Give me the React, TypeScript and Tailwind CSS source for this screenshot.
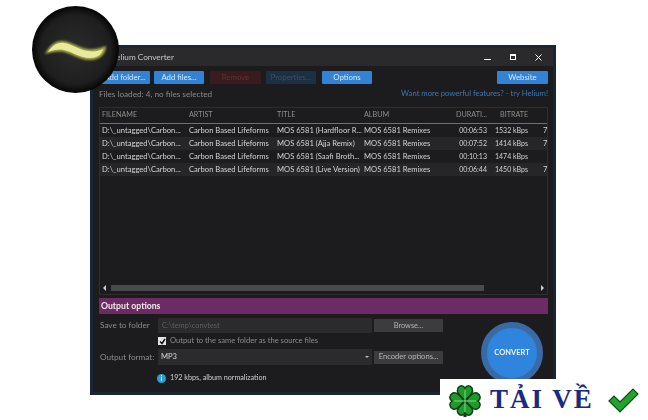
const rows = [
  ['MOS 6581 (Hardfloor R...', '00:06:53', '1532 kBps', '7'],
  ['MOS 6581 (Ajja Remix)', '00:07:52', '1414 kBps', '7'],
  ['MOS 6581 (Saafi Broth...', '00:10:13', '1474 kBps', ''],
  ['MOS 6581 (Live Version)', '00:06:44', '1450 kBps', '7'],
]

function ToolButton({ label, tone = 'blue', width }: { label: string; tone?: 'blue' | 'red' | 'slate'; width: string }) {
  const look =
    tone === 'blue'
      ? 'bg-[#3282d6] text-[#d6e8fa]'
      : tone === 'red'
        ? 'bg-[#3a1c1e] text-[#5e3234]'
        : 'bg-[#1c3044] text-[#35506a]'
  return <div className={`${width} h-[13px] flex items-center justify-center text-[7.8px] rounded-[1px] ${look}`}>{label}</div>
}

function Logo() {
  return (
    <svg className="absolute left-[32px] top-[6px] z-10" width="88" height="88" viewBox="0 0 88 88">
      <defs>
        <radialGradient id="disc" cx="50%" cy="50%" r="50%">
          <stop offset="0%" stopColor="#2c2c2d" />
          <stop offset="80%" stopColor="#1e1e1f" />
          <stop offset="100%" stopColor="#050505" />
        </radialGradient>
        <filter id="glow" x="-30%" y="-60%" width="160%" height="220%">
          <feGaussianBlur stdDeviation="1.2" />
        </filter>
      </defs>
      <circle cx="43.5" cy="43.5" r="43.5" fill="url(#disc)" />
      <path d="M13 48C17 40 23 34 31 35C40 36 47 42 56 43C62 44 68 42 74 40C74 48 68 54 58 54C48 54 41 48 32 46C26 45 20 46 13 48Z" fill="#a9ab4c" filter="url(#glow)" />
      <path d="M16 46C20 40 25 36 32 37C40 38 47 44 56 45C62 46 67 45 71 43C70 49 64 52 58 52C48 52 41 46 32 44C26 43 21 44 16 46Z" fill="#e9eb9c" />
    </svg>
  )
}

function Watermark() {
  return (
    <div className="absolute left-[440px] top-[379px] w-[208px] h-[41px] bg-white flex items-center">
      <svg className="ml-[9px] mt-[3px]" width="32" height="34" viewBox="0 0 32 34">
        <path d="M16 33V17" stroke="#0f3d12" strokeWidth="3" />
        <g fill="#1f9a2b" stroke="#123f14" strokeWidth="1.5">
          <path d="M16 16C10 12 7 8 9 4C11 1 14 1 16 4C18 1 21 1 23 4C25 8 22 12 16 16Z" />
          <path d="M15 17C11 11 7 8 4 9C0 11 0 15 3 17C0 19 0 23 4 25C7 26 11 23 15 17Z" />
          <path d="M17 17C21 11 25 8 28 9C32 11 32 15 29 17C32 19 32 23 28 25C25 26 21 23 17 17Z" />
          <path d="M16 18C10 22 7 26 9 29C11 32 14 32 16 29C18 32 21 32 23 29C25 26 22 22 16 18Z" />
        </g>
        <path d="M16 6V28M5 17H27" stroke="#7fd98a" strokeWidth="1" />
      </svg>
      <span className="ml-[9px] w-[106px] font-['Liberation_Serif',serif] font-bold text-[27px] leading-none tracking-[2px] text-[#1a2a80] whitespace-nowrap">
        TẢI VỀ
      </span>
      <svg className="ml-[11px]" width="32" height="28" viewBox="0 0 32 28">
        <path d="M2 15L7 10L13 16L26 3L31 8L13 26Z" fill="#21a32f" stroke="#0f4d16" strokeWidth="1.2" />
      </svg>
    </div>
  )
}

export default function App() {
  return (
    <div className="relative w-[648px] h-[420px] bg-white overflow-hidden font-['Lato',sans-serif]">
      <Logo />

      {/* App window */}
      <div className="absolute left-[90px] top-[45px] w-[466px] h-[350px] border-[3px] border-[#1a2635] bg-[#1c1c1e] flex flex-col blur-[0.3px]">
        <div className="h-[18px] shrink-0 bg-[#2a2a2c] flex items-center justify-between pl-[17px] pr-[11px]">
          <span className="text-[8.2px] text-[#c8c8c8]">Helium Converter</span>
          <div className="flex items-center gap-[19px]">
            <div className="w-[7px] h-[1.5px] bg-white mt-[5px]" />
            <div className="w-[6px] h-[6px] border border-t-2 border-white" />
            <svg width="7" height="7" viewBox="0 0 7 7" stroke="#fff" strokeWidth="1">
              <path d="M0.5 0.5L6.5 6.5M6.5 0.5L0.5 6.5" />
            </svg>
          </div>
        </div>

        <div className="flex-1 flex flex-col pl-[6px] pr-[5px]">
          <div className="mt-[5px] flex items-center">
            <ToolButton label="Add folder..." width="w-[50px] ml-[1px]" />
            <ToolButton label="Add files..." width="w-[50px] ml-[4px]" />
            <ToolButton label="Remove" tone="red" width="w-[51px] ml-[6px]" />
            <ToolButton label="Properties..." tone="slate" width="w-[50px] ml-[5px]" />
            <ToolButton label="Options" width="w-[50px] ml-[6px]" />
            <div className="flex-1" />
            <ToolButton label="Website" width="w-[51px]" />
          </div>

          <div className="mt-[3px] h-[14px] flex items-center justify-between">
            <span className="text-[8.2px] text-[#8a8a8a]">Files loaded: 4, no files selected</span>
            <span className="text-[7.7px] text-[#3b78b8]">Want more powerful features? - try Helium!</span>
          </div>

          {/* File list */}
          <div className="mt-[6px] h-[188px] border border-[#2e2e30] flex flex-col overflow-hidden">
            <div className="h-[16px] shrink-0 border-b border-[#707070] grid grid-cols-[89px_88px_87px_87px_36px_56px_1fr] items-center text-[7.2px] text-[#8e8e8e]">
              <span className="pl-[2px]">FILENAME</span>
              <span>ARTIST</span>
              <span>TITLE</span>
              <span>ALBUM</span>
              <span className="text-right whitespace-nowrap">DURATI...</span>
              <span className="pl-[13px]">BITRATE</span>
              <span />
            </div>
            {rows.map(([title, time, rate, extra], i) => (
              <div
                key={title}
                className={`h-[13px] shrink-0 grid grid-cols-[89px_88px_87px_87px_36px_56px_1fr] items-center text-[7.6px] text-[#d4d4d4] whitespace-nowrap ${i % 2 === 1 ? 'bg-[#262628]' : ''}`}
              >
                <span className="pl-[2px]">D:\_untagged\Carbon...</span>
                <span>Carbon Based Lifeforms</span>
                <span>{title}</span>
                <span>MOS 6581 Remixes</span>
                <span className="text-right text-[7px]">{time}</span>
                <span className="pl-[8px] text-[7px]">{rate}</span>
                <span>{extra}</span>
              </div>
            ))}
            <div className="flex-1" />
            <div className="h-[9px] mb-[2px] shrink-0 flex items-center px-[3px] gap-[3px]">
              <div className="w-0 h-0 border-y-[3px] border-y-transparent border-r-[3px] border-r-[#cfcfcf]" />
              <div className="ml-[2px] w-[373px] h-[6px] bg-[#4a4a4c]" />
              <div className="flex-1" />
              <div className="w-0 h-0 border-y-[3px] border-y-transparent border-l-[3px] border-l-[#cfcfcf]" />
            </div>
          </div>

          <div className="mt-[3px] h-[16px] bg-[#6d2a63] flex items-center pl-[2px] text-[8.7px] font-bold text-[#ececec]">Output options</div>

          {/* Output options */}
          <div className="mt-[4px] grid grid-cols-[57px_214px_auto] gap-x-[2px] items-center justify-start text-[8.2px] text-[#8c8c8c] whitespace-nowrap">
            <span className="pl-[1px]">Save to folder</span>
            <div className="h-[15px] bg-[#2b2b2d] flex items-center pl-[4px] text-[7.4px] text-[#5f5f5f]">C:\temp\convtest</div>
            <div className="w-[69px] h-[13px] bg-[#3c3c3e] flex items-center justify-center text-[7.4px] text-[#b4b4b4]">Browse...</div>

            <span />
            <div className="h-[16px] flex items-center gap-[4px]">
              <div className="w-[8px] h-[8px] bg-[#e4e4e4] flex items-center justify-center">
                <svg width="7" height="7" viewBox="0 0 7 7" fill="none" stroke="#111" strokeWidth="1.5">
                  <path d="M1 3.5L3 5.5L6 1" />
                </svg>
              </div>
              <span className="text-[7.6px] text-[#8c8c8c]">Output to the same folder as the source files</span>
            </div>
            <span />

            <span className="pl-[1px]">Output format:</span>
            <div className="h-[16px] bg-[#2b2b2d] flex items-center justify-between pl-[3px] pr-[3px] text-[7.6px] text-[#d8d8d8]">
              MP3
              <div className="w-0 h-0 border-x-[2px] border-x-transparent border-t-[2px] border-t-[#bdbdbd]" />
            </div>
            <div className="w-[69px] h-[13px] bg-[#3c3c3e] flex items-center justify-center text-[7.6px] text-[#b4b4b4]">Encoder options...</div>
          </div>

          <div className="mt-[8px] ml-[58px] flex items-center gap-[4px] text-[7.2px] text-[#cfcfcf]">
            <div className="w-[9px] h-[9px] rounded-full bg-[#2b9fd8] flex items-center justify-center text-[7px] font-bold leading-none text-[#d5eefa]">i</div>
            192 kbps, album normalization
          </div>
        </div>

        <div className="absolute left-[388px] top-[274px] w-[62px] h-[62px] rounded-full bg-[#2f85de] border-[6px] border-[#3a6aa4] flex items-center justify-center text-[7.5px] font-bold text-[#e6f3ff]">
          CONVERT
        </div>
      </div>

      <Watermark />
    </div>
  )
}
